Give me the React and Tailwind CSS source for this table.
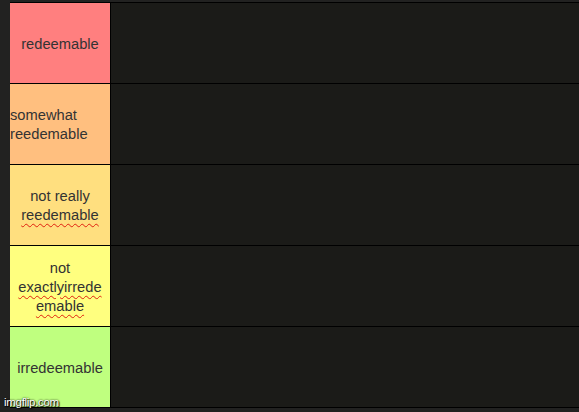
const tiers = [
  { color: 'bg-[#ff7f7f]', lines: [{ t: 'redeemable' }], align: 'text-center' },
  { color: 'bg-[#ffbf7f]', lines: [{ t: 'somewhat' }, { t: 'reedemable' }], align: 'text-left' },
  { color: 'bg-[#ffdf7f]', lines: [{ t: 'not really' }, { t: 'reedemable', typo: true }], align: 'text-center' },
  {
    color: 'bg-[#ffff7f]',
    lines: [{ t: 'not' }, { t: 'exactlyirrede', typo: true }, { t: 'emable', typo: true }],
    align: 'text-center'
  },
  { color: 'bg-[#bfff7f]', lines: [{ t: 'irredeemable' }], align: 'text-center' }
];

export default function App() {
  return (
    <div
      className="relative h-[412px] w-[579px] overflow-hidden bg-[#222221] pl-[10px] pt-[2px]"
      style={{ fontFamily: '"Liberation Sans", Arial, sans-serif' }}
    >
      <div className="flex flex-col border-t border-black">
        {tiers.map((tier, i) => (
          <div key={i} className="flex h-[81px] border-b border-black">
            <div
              className={`flex w-[101px] flex-col justify-center border-r border-black pt-[2px] ${tier.color} ${tier.align} text-[14.7px] leading-[19px] text-[#333]`}
            >
              {tier.lines.map((line, j) => (
                <span key={j}>
                  {line.typo ? (
                    <span className="underline decoration-[#e0200f] decoration-wavy decoration-1 underline-offset-[3px]">
                      {line.t}
                    </span>
                  ) : (
                    line.t
                  )}
                </span>
              ))}
            </div>
            <div className="flex-1 bg-[#1b1b18]" />
          </div>
        ))}
      </div>

      <span
        className="absolute bottom-[3px] left-[4px] text-[11.5px] leading-[13px] font-medium tracking-[-0.3px] text-white"
        style={{ textShadow: '0 0 2px #000, 1px 1px 1px #000' }}
      >
        imgflip.com
      </span>
    </div>
  );
}
